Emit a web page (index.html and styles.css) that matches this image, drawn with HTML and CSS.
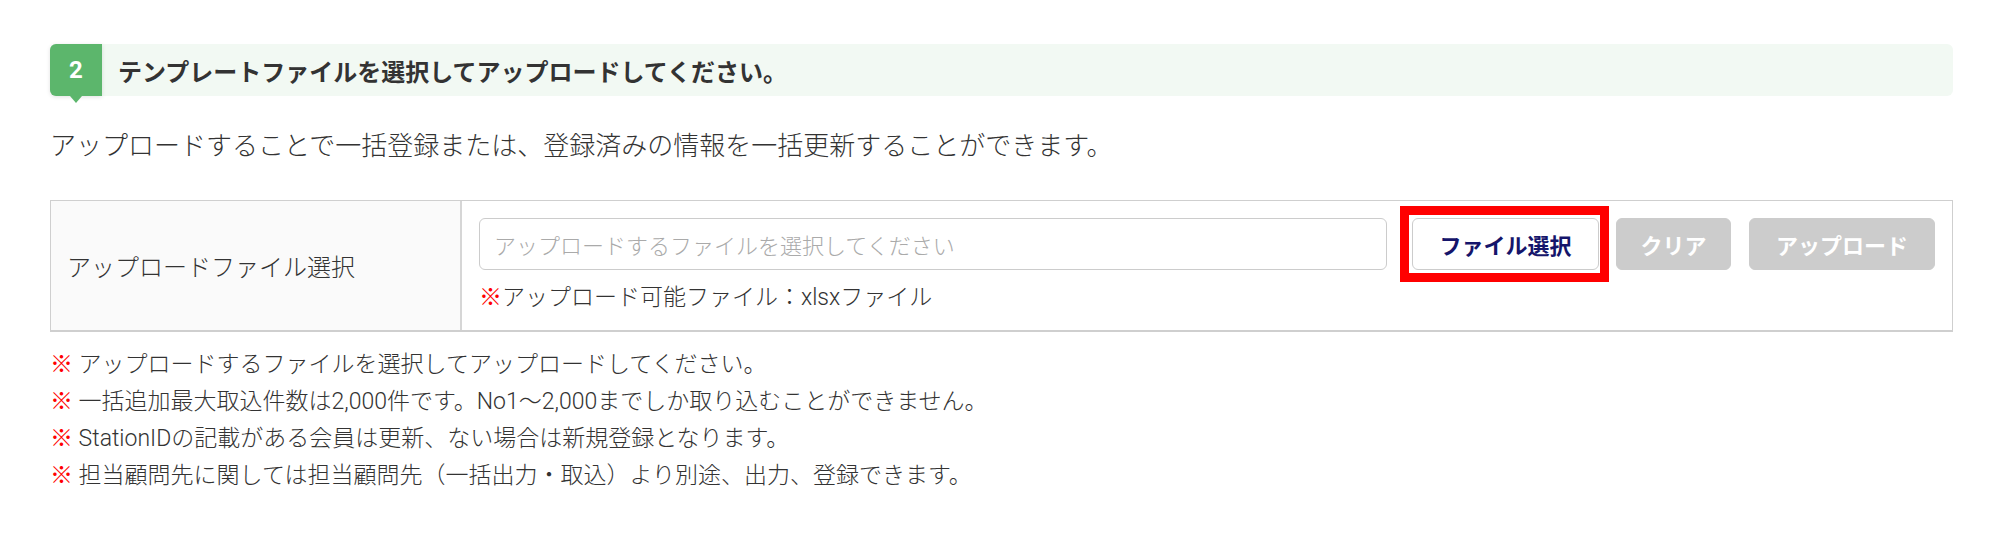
FILE: index.html
```html
<!DOCTYPE html>
<html lang="ja">
<head>
<meta charset="utf-8">
<title>テンプレートファイル アップロード</title>
<link rel="stylesheet" href="styles.css">
</head>
<body>
<div class="page">
  <div class="step-head">
    <div class="step-num">2</div>
    <div class="step-title">テンプレートファイルを選択してアップロードしてください。</div>
  </div>
  <p class="desc">アップロードすることで一括登録または、登録済みの情報を一括更新することができます。</p>
  <div class="upload-table">
    <div class="label-cell">アップロードファイル選択</div>
    <div class="field-cell">
      <div class="field-row">
        <div class="file-input">アップロードするファイルを選択してください</div>
        <div class="highlight-wrap">
          <button class="btn btn-select" type="button">ファイル選択</button>
          <span class="highlight"></span>
        </div>
        <button class="btn btn-disabled btn-clear" type="button">クリア</button>
        <button class="btn btn-disabled" type="button">アップロード</button>
      </div>
      <div class="field-note"><span class="mark">※</span>アップロード可能ファイル：xlsxファイル</div>
    </div>
  </div>
  <ul class="notes">
    <li><span class="mark">※</span> アップロードするファイルを選択してアップロードしてください。</li>
    <li><span class="mark">※</span> 一括追加最大取込件数は2,000件です。No1～2,000までしか取り込むことができません。</li>
    <li><span class="mark">※</span> StationIDの記載がある会員は更新、ない場合は新規登録となります。</li>
    <li><span class="mark">※</span> 担当顧問先に関しては担当顧問先（一括出力・取込）より別途、出力、登録できます。</li>
  </ul>
</div>
</body>
</html>
```
FILE: styles.css
```css
* { box-sizing: border-box; }
html, body { margin: 0; padding: 0; background: #fff; }
body {
  font-family: Roboto, "Noto Sans CJK JP", sans-serif;
  font-weight: 300;
  color: #333;
}
.page {
  padding: 44px 47px 0 50px;
}
.step-head {
  display: flex;
  align-items: center;
  height: 52px;
  background: #f2f9f3;
  border-radius: 6px;
}
.step-num {
  position: relative;
  width: 52px;
  height: 52px;
  flex: none;
  background: #5cb66c;
  color: #fff;
  font-weight: 700;
  font-size: 24px;
  display: flex;
  align-items: center;
  justify-content: center;
  border-radius: 6px 0 0 6px;
  box-shadow: 0 1px 4px rgba(0,0,0,0.12);
}
.step-num::after {
  content: "";
  position: absolute;
  left: 20px;
  bottom: -7px;
  border-left: 6px solid transparent;
  border-right: 6px solid transparent;
  border-top: 7px solid #5cb66c;
}
.step-title {
  margin-left: 16px;
  font-size: 24px;
  font-weight: 700;
  color: #333;
}
.desc {
  margin: 30px 0 0;
  font-size: 26px;
  line-height: 40px;
  color: #333;
}
.upload-table {
  margin-top: 34px;
  display: flex;
  border: 1px solid #cfcfcf;
  border-width: 1px 1px 2px 1px;
}
.label-cell {
  width: 411px;
  flex: none;
  background: #fafafa;
  border-right: 2px solid #d6d6d6;
  display: flex;
  align-items: center;
  padding-left: 16px;
  font-size: 24px;
}
.field-cell {
  flex: 1;
  padding: 17px 17px 17px 17px;
}
.field-row {
  display: flex;
  align-items: center;
}
.file-input {
  flex: 1;
  height: 52px;
  border: 1px solid #cccccc;
  border-radius: 6px;
  display: flex;
  align-items: center;
  padding-left: 14px;
  font-size: 22px;
  color: #aaa;
}
.highlight-wrap {
  position: relative;
  margin-left: 25px;
}
.highlight {
  position: absolute;
  left: -12px;
  right: -10px;
  top: -12px;
  bottom: -12px;
  border: 9px solid #ff0000;
  pointer-events: none;
}
.btn {
  height: 52px;
  padding: 0 26px;
  font-family: inherit;
  font-size: 22px;
  font-weight: 700;
  border-radius: 6px;
  border: 1px solid #cccccc;
  background: #fff;
  display: block;
}
.btn-select {
  color: #15156b;
  width: 187px;
}
.btn-disabled {
  background: #cccccc;
  border-color: #cccccc;
  color: #fff;
  margin-left: 18px;
}
.btn-clear {
  margin-left: 17px;
  width: 115px;
  padding: 0;
}
.field-note {
  margin-top: 12px;
  font-size: 23px;
  line-height: 31px;
}
.mark { color: #ff0000; }
.notes {
  list-style: none;
  margin: 14px 0 0;
  padding: 0;
  font-size: 23px;
  line-height: 37px;
}
```
